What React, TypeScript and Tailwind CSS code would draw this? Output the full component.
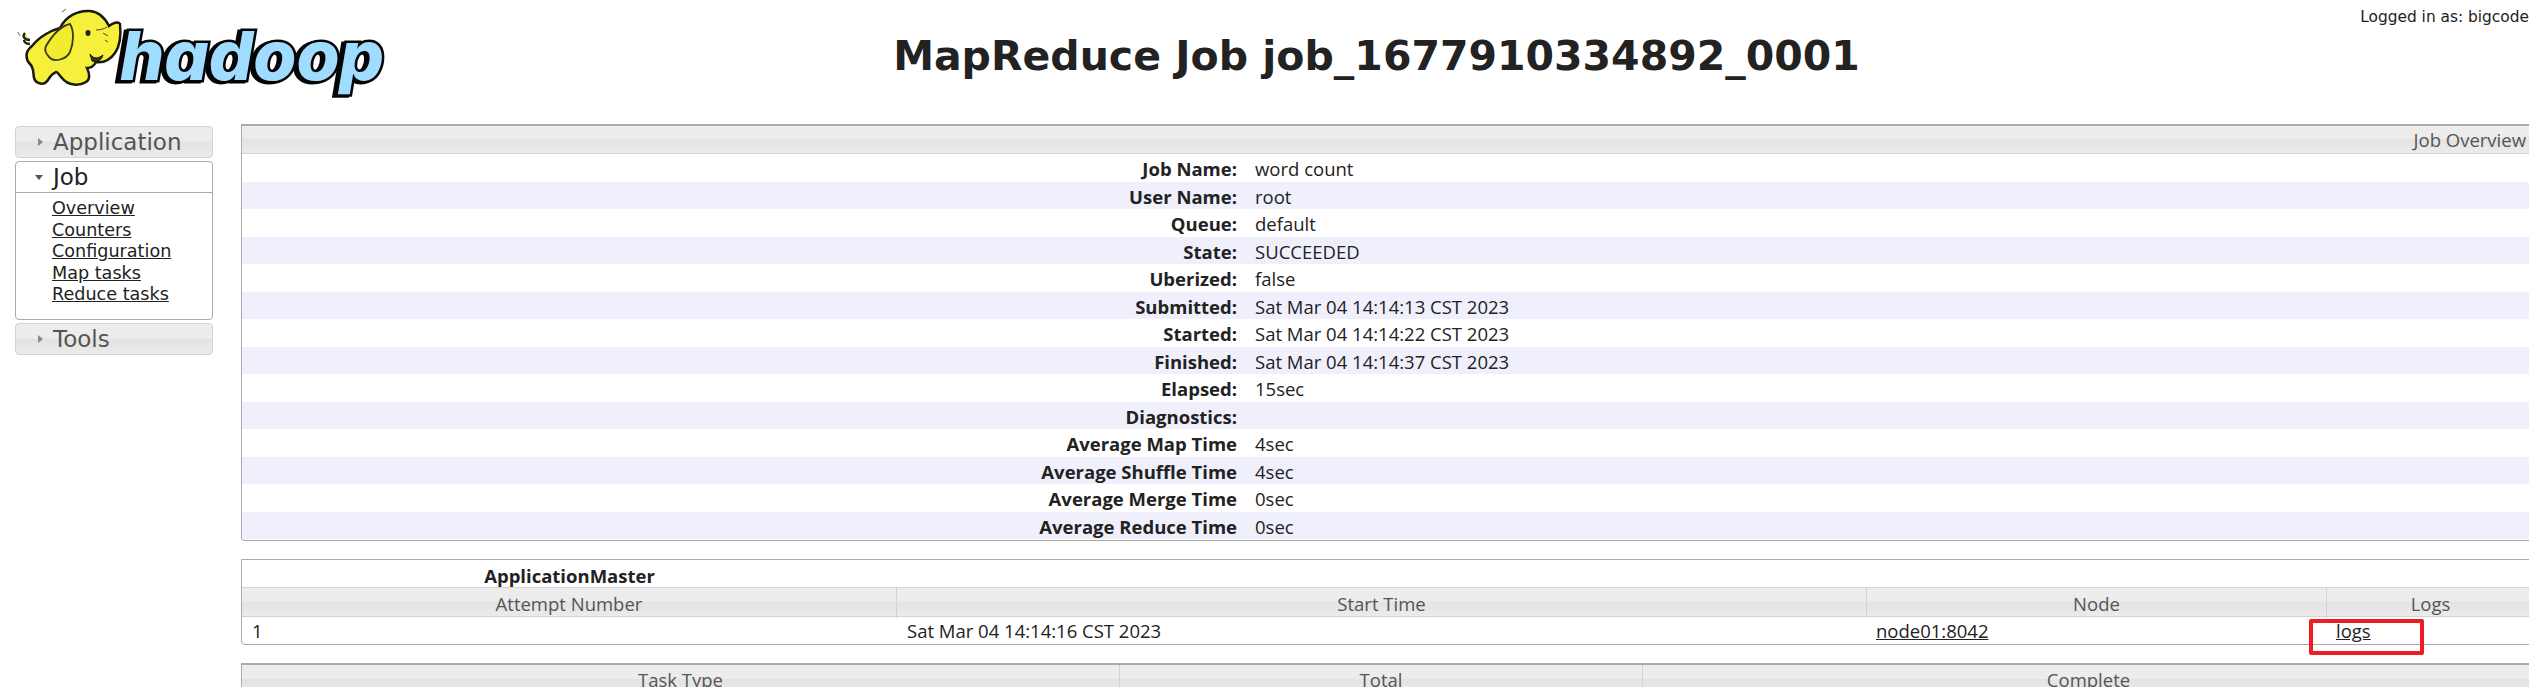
import React from "react";

const headerBg =
  "bg-[linear-gradient(180deg,#ededed_0%,#ececec_48%,#e3e3e3_50%,#ebebeb_100%)]";

const overview: [string, string][] = [
  ["Job Name:", "word count"],
  ["User Name:", "root"],
  ["Queue:", "default"],
  ["State:", "SUCCEEDED"],
  ["Uberized:", "false"],
  ["Submitted:", "Sat Mar 04 14:14:13 CST 2023"],
  ["Started:", "Sat Mar 04 14:14:22 CST 2023"],
  ["Finished:", "Sat Mar 04 14:14:37 CST 2023"],
  ["Elapsed:", "15sec"],
  ["Diagnostics:", ""],
  ["Average Map Time", "4sec"],
  ["Average Shuffle Time", "4sec"],
  ["Average Merge Time", "0sec"],
  ["Average Reduce Time", "0sec"],
];

const HadoopLogo: React.FC = () => (
  <svg width="420" height="110" viewBox="0 0 420 110" className="block">
    {/* wordmark, kept as live text */}
    <text
      x="120"
      y="80"
      textLength="264"
      lengthAdjust="spacingAndGlyphs"
      fontFamily="Inter, 'DejaVu Sans', sans-serif"
      fontWeight="800"
      fontStyle="italic"
      fontSize="68"
      fill="#a0dcff"
      stroke="#050505"
      strokeWidth="5"
      paintOrder="stroke"
      strokeLinejoin="miter"
      className="drop-shadow-[-3px_1px_0_#050505]"
    >
      hadoop
    </text>
    {/* elephant */}
    <path
      d="M32 46C40 36 52 30 60 28C66 16 78 10 90 11C100 12 106 20 109 26C113 23 118 21 120 24C121 34 120 46 115 53C110 60 103 63 96 62C94 66 90 68 87 68C90 74 90 80 86 82C80 86 68 86 62 78C58 74 58 72 56 72C52 74 50 76 48 80C44 86 36 84 34 78C33 72 34 68 30 64C26 60 24 52 32 46Z"
      fill="#f6f03c"
      stroke="#1a1a10"
      strokeWidth="2.5"
    />
    <path
      d="M46 46C52 36 60 26 70 24C74 30 74 42 70 52C66 60 54 62 50 58C46 54 44 50 46 46Z"
      fill="#f2ec30"
      stroke="#3a3a18"
      strokeWidth="1.8"
    />
    <path d="M90 54C94 60 99 58 103 55C102 60 97 63 92 61Z" fill="#3b3414" stroke="#1a1a10" />
    <ellipse cx="88" cy="33" rx="2.5" ry="3" fill="#222" />
    <path d="M96 30C100 30 104 29 107 27M103 33L108 36M105 40L108 42" stroke="#4a4a20" strokeWidth="1" fill="none" />
    <path d="M30 40C24 40 22 36 25 33M30 44C26 44 24 42 24 40" stroke="#222" strokeWidth="2.4" fill="#f6f03c" />
    <path d="M20 36L18 32M62 12L66 9" stroke="#999" strokeWidth="1.5" />
  </svg>
);

const ClosedItem: React.FC<{ label: string }> = ({ label }) => (
  <div
    className={`flex h-[32px] items-center rounded-[4px] border border-[#d3d3d3] pl-[22px] text-[#555555] ${headerBg}`}
  >
    <span className="h-0 w-0 border-y-[4px] border-l-[5px] border-y-transparent border-l-[#888888]" />
    <span className="ml-[10px] text-[23px] leading-none">{label}</span>
  </div>
);

const Sidebar: React.FC = () => (
  <nav className="flex w-[198px] shrink-0 flex-col gap-[3px] font-['DejaVu_Sans',sans-serif]">
    <ClosedItem label="Application" />
    <div className="h-[159px] rounded-[4px] border border-[#aaaaaa] bg-white">
      <div className="flex h-[31px] items-center border-b border-[#aaaaaa] pl-[19px] text-[#222222]">
        <span className="h-0 w-0 border-x-[4px] border-t-[5px] border-x-transparent border-t-[#555555]" />
        <span className="ml-[10px] text-[23px] leading-none">Job</span>
      </div>
      <ul className="pl-[36px] pt-[5px] text-[17.6px] leading-[21.5px] text-[#222222] underline">
        <li>Overview</li>
        <li>Counters</li>
        <li>Configuration</li>
        <li>Map tasks</li>
        <li>Reduce tasks</li>
      </ul>
    </div>
    <ClosedItem label="Tools" />
  </nav>
);

const App: React.FC = () => {
  return (
    <div className="relative h-[687px] w-[2529px] overflow-hidden bg-white font-['Open_Sans',sans-serif] text-[#222222]">
      <div className="w-[2535px]">
        {/* header */}
        <header className="relative h-[124px]">
          <div className="absolute left-0 top-0">
            <HadoopLogo />
          </div>
          <div className="absolute right-[6px] top-[9px] font-['DejaVu_Sans',sans-serif] text-[15.4px] leading-[17px]">
            Logged in as: bigcode
          </div>
          <h1 className="pt-[32px] pl-[218px] text-center font-['DejaVu_Sans',sans-serif] text-[41px] font-bold leading-[48px]">
            MapReduce Job job_1677910334892_0001
          </h1>
        </header>

        <div className="flex">
          <div className="w-[241px] shrink-0 pl-[15px] pt-[2px]">
            <Sidebar />
          </div>

          <main className="min-w-0 flex-1 text-[18.5px]">
            {/* job overview */}
            <section className="rounded-b-[4px] border border-t-2 border-[#aaaaaa] pb-[1px]">
              <div
                className={`flex h-[28px] items-center justify-end border-b border-[#d3d3d3] pr-[8px] text-[#555555] ${headerBg}`}
              >
                Job Overview
              </div>
              {overview.map(([label, value], i) => (
                <div
                  key={label}
                  className={`grid h-[27.5px] grid-cols-[1003px_1fr] items-center pt-[3px] leading-none ${
                    i % 2 === 1 ? "bg-[#f0f0fc]" : "bg-white"
                  }`}
                >
                  <div className="pr-[8px] text-right font-bold">{label}</div>
                  <div className="pl-[10px]">{value}</div>
                </div>
              ))}
            </section>

            {/* application master */}
            <section className="mt-[18px] rounded-b-[4px] border border-[#aaaaaa]">
              <div className="grid h-[27px] grid-cols-[655px_1fr] items-center pt-[2px]">
                <div className="text-center font-bold">ApplicationMaster</div>
              </div>
              <div
                className={`grid h-[30px] grid-cols-[655px_970px_460px_1fr] items-center border-y border-[#d3d3d3] text-center text-[#555555] ${headerBg}`}
              >
                <div className="flex h-full items-center justify-center border-r border-[#d3d3d3] pt-[2px]">
                  Attempt Number
                </div>
                <div className="flex h-full items-center justify-center border-r border-[#d3d3d3] pt-[2px]">
                  Start Time
                </div>
                <div className="flex h-full items-center justify-center border-r border-[#d3d3d3] pt-[2px]">
                  Node
                </div>
                <div className="pt-[2px]">Logs</div>
              </div>
              <div className="grid h-[27px] grid-cols-[655px_970px_460px_1fr] items-center">
                <div className="pl-[10px]">1</div>
                <div className="pl-[10px]">Sat Mar 04 14:14:16 CST 2023</div>
                <div className="pl-[9px] underline">node01:8042</div>
                <div className="pl-[9px] underline">logs</div>
              </div>
            </section>

            {/* task summary, cut off by the window */}
            <section className="mt-[18px] border border-t-2 border-[#aaaaaa]">
              <div
                className={`grid h-[29px] grid-cols-[878px_523px_1fr] items-center text-center text-[#555555] ${headerBg}`}
              >
                <div className="flex h-full items-center justify-center border-r border-[#d3d3d3]">
                  Task Type
                </div>
                <div className="flex h-full items-center justify-center border-r border-[#d3d3d3]">
                  Total
                </div>
                <div>Complete</div>
              </div>
            </section>
          </main>
        </div>
      </div>

      {/* annotation drawn over the page */}
      <div className="absolute left-[2309px] top-[619px] h-[36px] w-[115px] rounded-[2px] border-[4px] border-[#ee1c25]" />
    </div>
  );
};

export default App;
